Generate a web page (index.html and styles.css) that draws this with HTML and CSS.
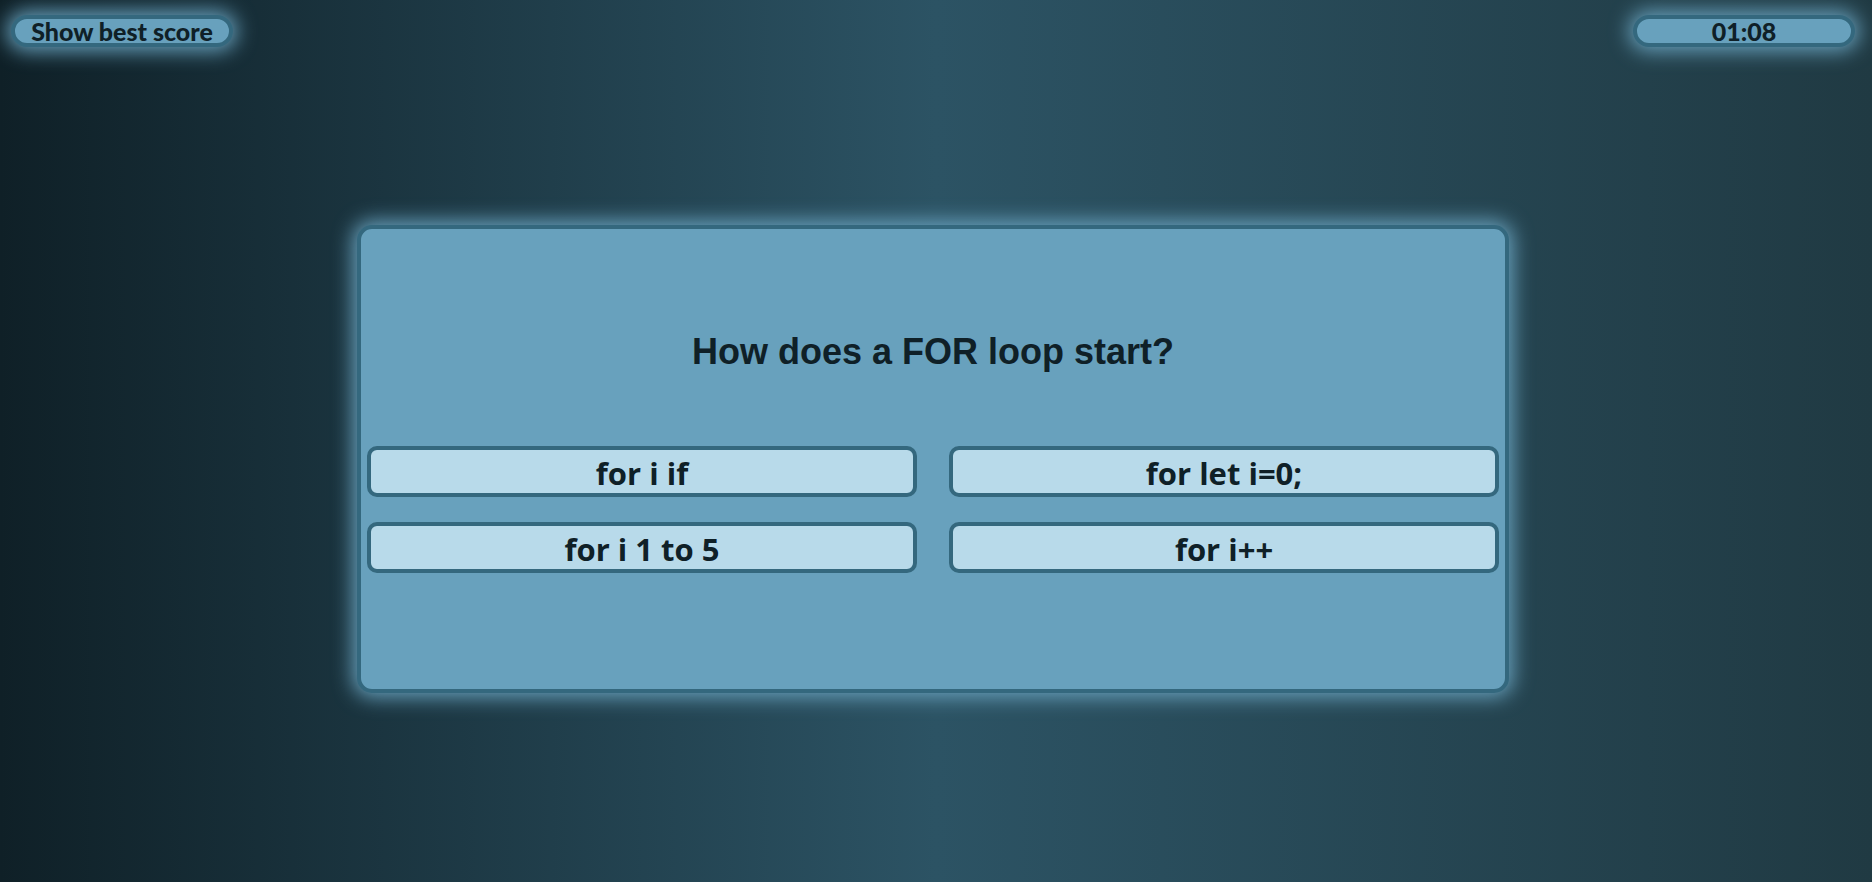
FILE: index.html
```
<!DOCTYPE html>
<html lang="en">
<head>
<meta charset="utf-8">
<meta name="viewport" content="width=device-width, initial-scale=1">
<title>Code quiz</title>
<link rel="stylesheet" href="styles.css">
</head>
<body>
<header class="topbar">
  <button type="button" class="pill">Show best score</button>
  <time class="pill">01:08</time>
</header>
<main class="stage">
  <section class="card">
    <h1 class="question">How does a FOR loop start?</h1>
    <div class="answers">
      <button type="button" class="answer">for i if</button>
      <button type="button" class="answer">for let i=0;</button>
      <button type="button" class="answer">for i 1 to 5</button>
      <button type="button" class="answer">for i++</button>
    </div>
  </section>
</main>
</body>
</html>
```

FILE: styles.css
```
* {
  box-sizing: border-box;
}

body {
  margin: 0;
  min-height: 100vh;
  padding: 15px 17px 11px 11px;
  display: flex;
  flex-direction: column;
  background: linear-gradient(to right, #0f2027, #2c5364, #203a43);
  color: #0f2027;
}

.topbar {
  display: flex;
  justify-content: space-between;
  align-items: flex-start;
}

.pill {
  min-width: 222px;
  padding: 0 16px;
  border: 4px solid #34687e;
  border-radius: 16px;
  background: #68a1bd;
  box-shadow: 0 0 20px 4px #68a1bd;
  color: inherit;
  font: 900 25px/24px Lato, sans-serif;
  text-align: center;
}

.stage {
  flex: 1;
  display: flex;
  justify-content: center;
  align-items: center;
}

.card {
  width: 1152px;
  max-width: 100%;
  padding: 99px 6px 116px;
  border: 4px solid #34687e;
  border-radius: 15px;
  background: #68a1bd;
  box-shadow: 0 0 20px 4px #68a1bd;
}

.question {
  margin: 0 0 70px;
  font: bold 36px/48px "Liberation Sans", sans-serif;
  text-align: center;
}

.answers {
  display: grid;
  grid-template-columns: 1fr 1fr;
  gap: 25px 32px;
}

.answer {
  padding: 3px 0 0;
  border: 4px solid #34687e;
  border-radius: 10px;
  background: #b8daea;
  color: inherit;
  font: bold 31px/40px "Open Sans", sans-serif;
}
```
